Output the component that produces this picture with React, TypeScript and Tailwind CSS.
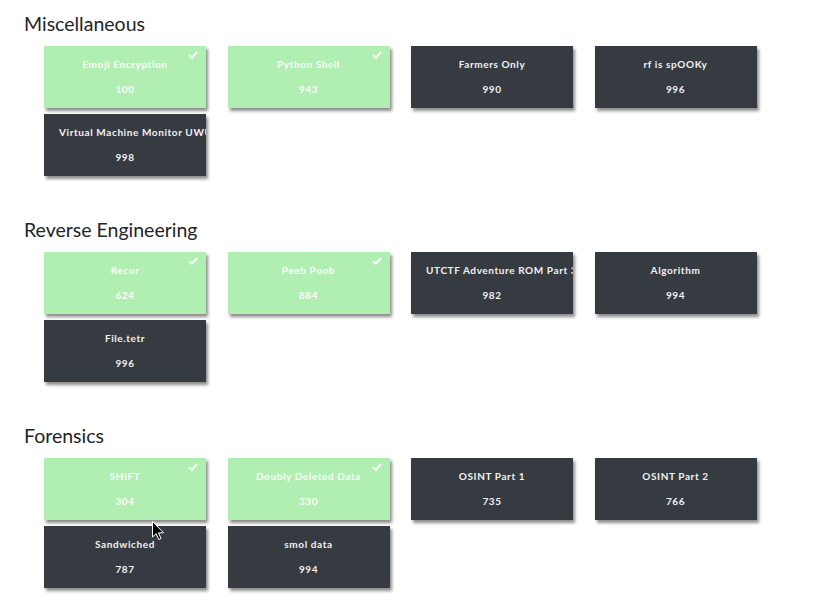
type Challenge = { name: string; points: number; solved?: boolean }

const sections: { title: string; items: Challenge[] }[] = [
  {
    title: 'Miscellaneous',
    items: [
      { name: 'Emoji Encryption', points: 100, solved: true },
      { name: 'Python Shell', points: 943, solved: true },
      { name: 'Farmers Only', points: 990 },
      { name: 'rf is spOOKy', points: 996 },
      { name: 'Virtual Machine Monitor UWU', points: 998 },
    ],
  },
  {
    title: 'Reverse Engineering',
    items: [
      { name: 'Recur', points: 624, solved: true },
      { name: 'Peeb Poob', points: 884, solved: true },
      { name: 'UTCTF Adventure ROM Part 3', points: 982 },
      { name: 'Algorithm', points: 994 },
      { name: 'File.tetr', points: 996 },
    ],
  },
  {
    title: 'Forensics',
    items: [
      { name: 'SHIFT', points: 304, solved: true },
      { name: 'Doubly Deleted Data', points: 330, solved: true },
      { name: 'OSINT Part 1', points: 735 },
      { name: 'OSINT Part 2', points: 766 },
      { name: 'Sandwiched', points: 787 },
      { name: 'smol data', points: 994 },
    ],
  },
]

function Card({ c }: { c: Challenge }) {
  return (
    <div
      className={`relative h-[62px] w-[162px] overflow-hidden px-[15px] text-center shadow-[2px_3px_3px_rgba(0,0,0,0.45)] ${
        c.solved ? 'bg-[#b0eeb1] text-white' : 'bg-[#363a41] text-[#f2f2f2]'
      }`}
    >
      {c.solved && (
        <svg className="absolute right-[8px] top-[5px]" width="10" height="8" viewBox="0 0 10 8">
          <polyline points="1,4.2 3.8,6.8 9,1.2" fill="none" stroke="white" strokeWidth="2" />
        </svg>
      )}
      <div className="mt-[12px] whitespace-nowrap text-[10px] font-bold leading-[13px] tracking-[0.6px]">{c.name}</div>
      <div className="mt-[12px] text-[10px] font-bold leading-[13px] tracking-[0.6px]">{c.points}</div>
    </div>
  )
}

export default function App() {
  return (
    <div className="relative min-h-[599px] bg-white pl-[24px] pt-[10px] font-['Lato',sans-serif]">
      {sections.map((s) => (
        <section key={s.title} className="mb-[40px]">
          <h2 className="text-[19.5px] leading-[27px] text-[#222529]">{s.title}</h2>
          <div className="ml-[20px] mt-[9px] grid w-[720px] grid-cols-[repeat(4,162.5px)] gap-x-[21px] gap-y-[6px]">
            {s.items.map((c) => (
              <Card key={c.name} c={c} />
            ))}
          </div>
        </section>
      ))}
      <svg className="absolute left-[152px] top-[521px]" width="13" height="20" viewBox="0 0 13 20">
        <path d="M0.5 0.5 L0.5 16 L4.2 12.6 L6.8 18.6 L9 17.6 L6.5 11.8 L11.5 11.8 Z" fill="black" stroke="white" strokeWidth="1" />
      </svg>
    </div>
  )
}
